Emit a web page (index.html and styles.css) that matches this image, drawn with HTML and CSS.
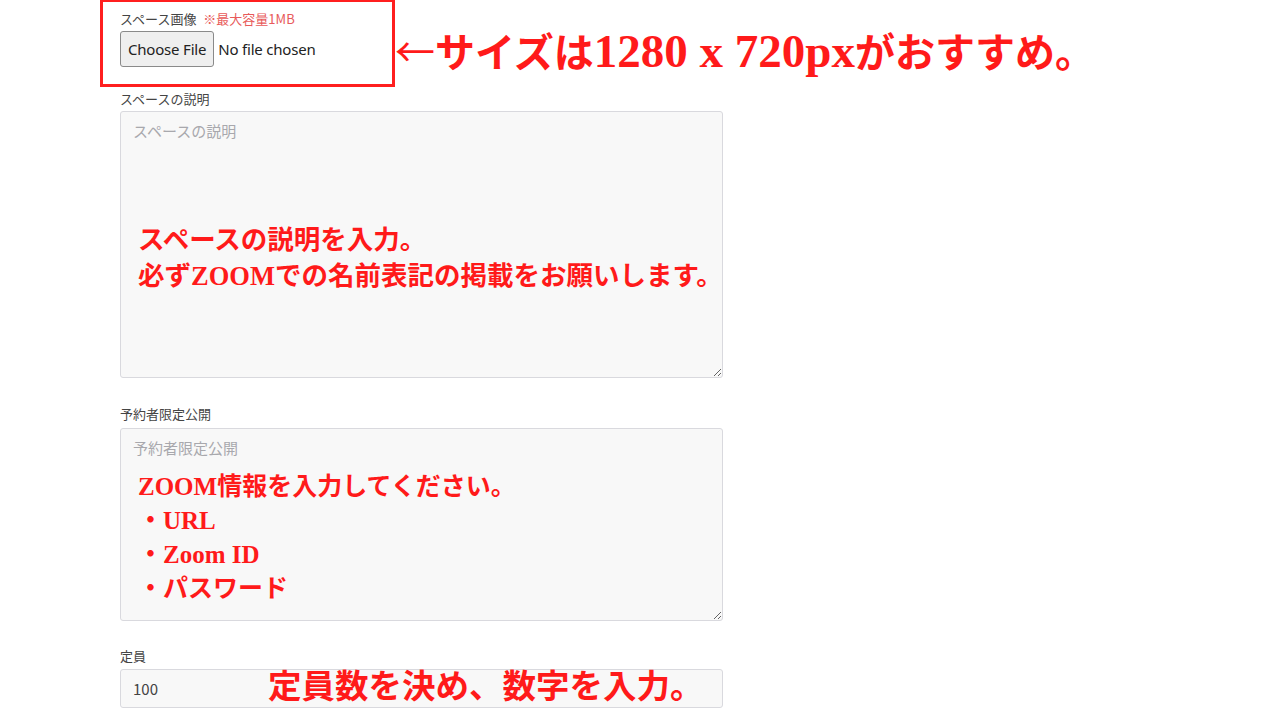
FILE: index.html
```html
<!DOCTYPE html>
<html lang="ja">
<head>
    <meta charset="UTF-8">
    <title>スペース作成</title>
    <link rel="stylesheet" href="styles.css">
</head>
<body>
    <form class="space-form">
        <div class="image-row">
            <div class="image-box">
                <label class="field-label" for="spaceImage">スペース画像 <span class="limit">※最大容量1MB</span></label>
                <input type="file" id="spaceImage" class="file-input">
            </div>
            <p class="note note-top"><span class="arrow">←</span>サイズは<span class="lat">1280 x 720px</span>がおすすめ。</p>
        </div>

        <label class="field-label first" for="description">スペースの説明</label>
        <div class="field">
            <textarea id="description" class="textarea tall" placeholder="スペースの説明"></textarea>
            <p class="note note-desc">スペースの説明を入力。<br>必ずZOOMでの名前表記の掲載をお願いします。</p>
        </div>

        <label class="field-label gap" for="privateInfo">予約者限定公開</label>
        <div class="field">
            <textarea id="privateInfo" class="textarea" placeholder="予約者限定公開"></textarea>
            <p class="note note-private">ZOOM情報を入力してください。<br>・URL<br>・Zoom ID<br>・パスワード</p>
        </div>

        <label class="field-label gap short" for="capacity">定員</label>
        <div class="field">
            <input type="text" id="capacity" class="text-input" value="100">
            <p class="note note-capacity">定員数を決め、数字を入力。</p>
        </div>
    </form>
</body>
</html>
```

FILE: styles.css
```css
body {
    margin: 0;
    font-family: "Noto Sans CJK JP", "Noto Sans", sans-serif;
    background-color: #fff;
    color: #333;
}
.space-form {
    width: 603px;
    margin-left: 120px;
}
.image-row {
    display: flex;
    align-items: flex-start;
    margin-left: -20px;
    width: 1140px;
}
.image-box {
    width: 272px;
    height: 74px;
    border: 3px solid #ff1f1f;
    border-top-width: 2px;
    padding: 8px 0 0 17px;
}
.field-label {
    display: block;
    font-size: 13px;
    line-height: 18px;
    color: #444;
    margin: 0 0 3px;
}
.image-box .field-label {
    margin: 0 0 3px;
}
.field-label.first {
    margin-top: 3px;
}
.field-label.gap {
    margin-top: 27px;
    margin-bottom: 5px;
}
.field-label.gap.short {
    margin-top: 26px;
    margin-bottom: 4px;
}
.limit {
    color: #e85a5a;
    margin-left: 4px;
}
.file-input {
    font-family: "Noto Sans", "Noto Sans CJK JP", sans-serif;
    font-size: 15px;
    color: #222;
    letter-spacing: -0.2px;
}
.file-input::file-selector-button {
    font-family: "Noto Sans", sans-serif;
    font-size: 15px;
    letter-spacing: -0.2px;
    padding: 7px 7px;
    margin-right: 4px;
    border: 1px solid #8a8a8a;
    border-radius: 3px;
    background-color: #efefef;
    color: #222;
}
.field {
    position: relative;
}
.textarea, .text-input {
    display: block;
    box-sizing: border-box;
    width: 603px;
    background-color: #f8f8f8;
    border: 1px solid #d9d9de;
    border-radius: 3px;
    font-family: "Noto Sans CJK JP", sans-serif;
    font-size: 15px;
    line-height: 20px;
    color: #444;
    padding: 9px 12px;
    margin: 0;
}
.textarea {
    height: 193px;
}
.textarea.tall {
    height: 267px;
}
.text-input {
    height: 39px;
}
.textarea::placeholder {
    color: #a8a8ad;
}
.note {
    margin: 0;
    color: #ff1a1a;
    font-family: "Liberation Serif", "Noto Sans CJK JP", serif;
    font-weight: 700;
    white-space: nowrap;
}
.note-top {
    font-size: 40px;
    line-height: 44px;
    margin: 28px 0 0 0;
}
.note-top .arrow {
    font-family: "Noto Sans CJK JP", sans-serif;
    font-weight: 400;
}
.note-top .lat {
    font-size: 47px;
}
.note-desc {
    position: absolute;
    left: 18px;
    top: 111px;
    font-size: 26.5px;
    line-height: 36px;
}
.note-private {
    position: absolute;
    left: 18px;
    top: 42px;
    font-size: 25px;
    line-height: 34px;
}
.note-capacity {
    position: absolute;
    left: 148px;
    top: -3px;
    font-size: 33.5px;
    line-height: 41px;
}
```
